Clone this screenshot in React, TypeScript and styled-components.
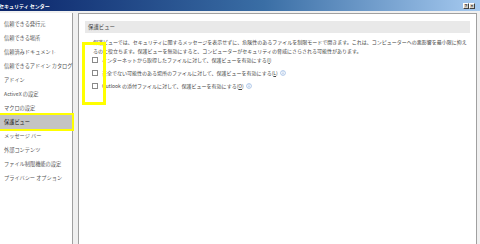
import styled, { createGlobalStyle } from 'styled-components'

const GlobalStyle = createGlobalStyle`
  html, body {
    margin: 0;
    padding: 0;
    background: #f0f0f0;
  }
  body {
    font-family: "Noto Sans CJK JP", "Noto Sans", sans-serif;
  }
`

const Window = styled.div`
  width: 480px;
  height: 244px;
  display: flex;
  flex-direction: column;
  background: #f0f0f0;
  overflow: hidden;
`

const TitleBar = styled.div`
  height: 11px;
  flex: none;
  display: flex;
  align-items: center;
  background: linear-gradient(to right, #0a246a 0%, #3a6ea5 55%, #a6caf0 100%);
  padding-right: 5px;
`

const Title = styled.div`
  flex: 1;
  margin-left: -1px;
  color: #ffffff;
  font-size: 5px;
  font-weight: bold;
  line-height: 11px;
  white-space: nowrap;
`

const CaptionButton = styled.div`
  width: 6px;
  height: 6px;
  margin-top: 1px;
  box-sizing: border-box;
  background: #d4d0c8;
  border: 1px solid;
  border-color: #ffffff #404040 #404040 #ffffff;
  display: flex;
  align-items: center;
  justify-content: center;
  color: #000;
  font-family: "Liberation Sans", sans-serif;
  font-size: 4px;
  font-weight: bold;
  line-height: 1;
`

const Body = styled.div`
  flex: 1;
  display: flex;
  padding-top: 2px;
  gap: 5px;
  min-height: 0;
`

const Sidebar = styled.ul`
  width: 72px;
  flex: none;
  margin: 0;
  padding: 4px 0 0;
  list-style: none;
  background: #ffffff;
  border-right: 1px solid #a0a0a0;
`

const NavItem = styled.li<{ $selected?: boolean }>`
  height: 14px;
  padding-left: 4px;
  font-size: 5.2px;
  line-height: 14px;
  white-space: nowrap;
  color: ${p => (p.$selected ? '#222' : '#555')};
  background: ${p => (p.$selected ? '#c4c4c4' : 'transparent')};
  box-shadow: ${p => (p.$selected ? '0 0 0 2px #ffff00' : 'none')};
  position: relative;
`

const Panel = styled.div`
  flex: 1;
  margin-right: 3px;
  background: #ffffff;
  border: 1px solid #a0a0a0;
  border-bottom: none;
  padding: 7px 6px 0;
  position: relative;
`

const SectionHeader = styled.div`
  height: 12px;
  background: #e9e9e9;
  padding-left: 3px;
  font-size: 5.4px;
  line-height: 12px;
  color: #444;
`

const Description = styled.p`
  margin: 4px 0 0;
  padding-left: 8px;
  font-size: 5px;
  line-height: 9px;
  color: #444;
  white-space: nowrap;
`

const OptionList = styled.div`
  display: flex;
  flex-direction: column;
  gap: 4px;
  padding-left: 7px;
`

const OptionRow = styled.label`
  height: 9px;
  display: flex;
  align-items: center;
  gap: 4px;
  font-size: 5px;
  color: #444;
  white-space: nowrap;
`

const CheckBox = styled.span`
  width: 6px;
  height: 6px;
  box-sizing: border-box;
  flex: none;
  border: 1px solid #8a8a8a;
  background: #fff;
`

const Key = styled.span`
  text-decoration: underline;
`

const Highlight = styled.div`
  position: absolute;
  left: 3px;
  top: 28px;
  width: 24px;
  height: 63px;
  box-sizing: border-box;
  border: 3px solid #ffff00;
  pointer-events: none;
`

function InfoIcon() {
  return (
    <svg width="6" height="6" viewBox="0 0 6 6" style={{ marginLeft: -2, flex: 'none' }}>
      <circle cx="3" cy="3" r="2.4" fill="#fff" stroke="#8db0df" strokeWidth="0.7" />
      <rect x="2.7" y="2.5" width="0.6" height="1.8" fill="#5b86c8" />
      <rect x="2.7" y="1.5" width="0.6" height="0.6" fill="#5b86c8" />
    </svg>
  )
}

const navItems = [
  '信頼できる発行元',
  '信頼できる場所',
  '信頼済みドキュメント',
  '信頼できるアドイン カタログ',
  'アドイン',
  'ActiveX の設定',
  'マクロの設定',
  '保護ビュー',
  'メッセージ バー',
  '外部コンテンツ',
  'ファイル制限機能の設定',
  'プライバシー オプション',
]

export default function App() {
  return (
    <>
      <GlobalStyle />
      <Window>
        <TitleBar>
          <Title>セキュリティ センター</Title>
          <CaptionButton>?</CaptionButton>
          <CaptionButton>×</CaptionButton>
        </TitleBar>
        <Body>
          <Sidebar>
            {navItems.map(item => (
              <NavItem key={item} $selected={item === '保護ビュー'}>
                {item}
              </NavItem>
            ))}
          </Sidebar>
          <Panel>
            <SectionHeader>保護ビュー</SectionHeader>
            <Description>
              保護ビューでは、セキュリティに関するメッセージを表示せずに、危険性のあるファイルを制限モードで開きます。これは、コンピューターへの悪影響を最小限に抑え
              <br />
              るのに役立ちます。保護ビューを無効にすると、コンピューターがセキュリティの脅威にさらされる可能性があります。
            </Description>
            <OptionList>
              <OptionRow>
                <CheckBox />
                <span>
                  インターネットから取得したファイルに対して、保護ビューを有効にする(<Key>I</Key>)
                </span>
              </OptionRow>
              <OptionRow>
                <CheckBox />
                <span>
                  安全でない可能性のある場所のファイルに対して、保護ビューを有効にする(<Key>L</Key>)
                </span>
                <InfoIcon />
              </OptionRow>
              <OptionRow>
                <CheckBox />
                <span>
                  Outlook の添付ファイルに対して、保護ビューを有効にする(<Key>O</Key>)
                </span>
                <InfoIcon />
              </OptionRow>
            </OptionList>
            <Highlight />
          </Panel>
        </Body>
      </Window>
    </>
  )
}
